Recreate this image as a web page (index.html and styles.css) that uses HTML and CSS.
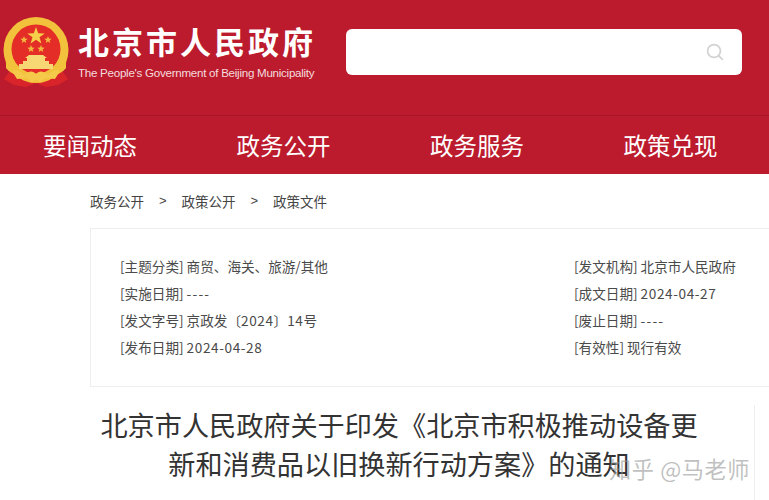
FILE: index.html
```html
<!DOCTYPE html>
<html lang="zh-CN">
<head>
<meta charset="utf-8">
<title>北京市人民政府</title>
<link rel="stylesheet" href="styles.css">
</head>
<body>
<header class="masthead">
  <svg class="emblem" width="70" height="72" viewBox="0 0 70 72" aria-hidden="true">
    <path d="M8 55 L3 62 L13 68 L25 70 L35 66 L45 70 L57 68 L67 62 L62 55 Z" fill="#d9252a"/>
    <ellipse cx="35" cy="33" rx="32.5" ry="33" fill="#f3c23c"/>
    <circle cx="35" cy="32" r="24.5" fill="#e32d26"/>
    <path d="M35 10 L37.2 16.3 L43.8 16.4 L38.5 20.3 L40.4 26.6 L35 22.8 L29.6 26.6 L31.5 20.3 L26.2 16.4 L32.8 16.3 Z" fill="#f6cf4a"/>
    <path d="M23 19 L24 21.6 L26.7 21.7 L24.6 23.4 L25.3 26 L23 24.5 L20.7 26 L21.4 23.4 L19.3 21.7 L22 21.6 Z" fill="#f2b740"/>
    <path d="M47 19 L48 21.6 L50.7 21.7 L48.6 23.4 L49.3 26 L47 24.5 L44.7 26 L45.4 23.4 L43.3 21.7 L46 21.6 Z" fill="#f2b740"/>
    <path d="M30 28 L31 30.6 L33.7 30.7 L31.6 32.4 L32.3 35 L30 33.5 L27.7 35 L28.4 32.4 L26.3 30.7 L29 30.6 Z" fill="#f2b740"/>
    <path d="M40 28 L41 30.6 L43.7 30.7 L41.6 32.4 L42.3 35 L40 33.5 L37.7 35 L38.4 32.4 L36.3 30.7 L39 30.6 Z" fill="#f2b740"/>
    <path d="M24 41 L28 38 H42 L46 41 H44 V44 H48 V47 H52 V52 H18 V47 H22 V44 H26 V41 Z" fill="#f6d774"/>
    <path d="M5 41 C9 53 20 58 35 58 C50 58 61 53 65 41 L65 51 C59 59 48 60 35 60 C22 60 11 59 5 51 Z" fill="#f3c23c"/>
    <path d="M11 54 C16 52 19 54 23 58 C28 54 31 53 35 57 C39 53 42 54 47 58 C51 54 54 52 59 54 L54 62 L44 61 L39 66 L35 62 L31 66 L26 61 L16 62 Z" fill="#f5c94a"/>
  </svg>
  <div class="brand">
    <div class="brand-cn">北京市人民政府</div>
    <div class="brand-en">The People's Government of Beijing Municipality</div>
  </div>
  <div class="search">
    <svg width="18" height="18" viewBox="0 0 18 18" aria-hidden="true">
      <circle cx="8" cy="8" r="6.4" fill="none" stroke="#d2d2d2" stroke-width="1.7"/>
      <path d="M12.6 12.6 L16.4 16.4" stroke="#d2d2d2" stroke-width="1.7" stroke-linecap="round"/>
    </svg>
  </div>
</header>
<nav class="mainnav">
  <a>要闻动态</a>
  <a>政务公开</a>
  <a>政务服务</a>
  <a>政策兑现</a>
</nav>
<div class="crumbs">
  <span>政务公开</span><span class="sep">&gt;</span><span>政策公开</span><span class="sep">&gt;</span><span>政策文件</span>
</div>
<section class="info">
  <ul class="col col-left">
    <li>[主题分类] 商贸、海关、旅游/其他</li>
    <li>[实施日期] <span class="num dashes">----</span></li>
    <li>[发文字号] 京政发〔<span class="num">2024</span>〕<span class="num">14</span>号</li>
    <li>[发布日期] <span class="num">2024-04-28</span></li>
  </ul>
  <ul class="col">
    <li>[发文机构] 北京市人民政府</li>
    <li>[成文日期] <span class="num">2024-04-27</span></li>
    <li>[废止日期] <span class="num dashes">----</span></li>
    <li>[有效性] 现行有效</li>
  </ul>
</section>
<main class="article">
  <h1>北京市人民政府关于印发《北京市积极推动设备更<br>新和消费品以旧换新行动方案》的通知</h1>
</main>
<div class="watermark">知乎 @马老师</div>
</body>
</html>
```
FILE: styles.css
```css
* { box-sizing: border-box; }
html, body { height: 500px; overflow: hidden; }
body {
  margin: 0;
  position: relative;
  background: #fff;
  font-family: "Noto Sans CJK SC", "Liberation Sans", sans-serif;
  color: #4d4d4d;
}
.masthead {
  height: 116px;
  background: #bc1b2d;
  border-bottom: 1px solid #a81727;
  display: flex;
  align-items: flex-start;
  padding-left: 1px;
}
.emblem { margin-top: 17px; flex: none; }
.brand { margin-left: 7px; width: 268px; flex: none; color: #fff; }
.brand-cn {
  margin-top: 20px;
  font-size: 31px;
  line-height: 42px;
  font-weight: 700;
  letter-spacing: 3px;
  white-space: nowrap;
}
.brand-en {
  margin-top: 3px;
  font-family: "Liberation Sans", sans-serif;
  font-size: 11.6px;
  line-height: 16px;
  color: #f4dcdf;
  letter-spacing: -0.27px;
  white-space: nowrap;
}
.search {
  margin-top: 29px;
  width: 396px;
  height: 46px;
  background: #fff;
  border-radius: 6px;
  display: flex;
  align-items: center;
  justify-content: flex-end;
  padding-right: 18px;
}
.mainnav {
  height: 58px;
  background: #bc1b2d;
  display: flex;
  align-items: center;
  padding-left: 43px;
  gap: 99.5px;
  color: #fff;
  font-size: 23.5px;
  line-height: 58px;
}
.crumbs {
  height: 54px;
  padding-left: 90px;
  display: flex;
  align-items: center;
  font-size: 13.5px;
  line-height: 52px;
  color: #444;
}
.sep { width: 37.5px; text-align: center; font-family: "Liberation Sans", sans-serif; font-size: 13px; }
.info {
  margin-left: 90px;
  height: 159px;
  width: 700px;
  border: 1px solid #eee;
  display: flex;
  padding: 24px 0 0 29px;
}
.col { list-style: none; margin: 0; padding: 0; font-size: 13.6px; line-height: 27px; color: #4a4a4a; }
.col-left { width: 454px; flex: none; }
.num { letter-spacing: 0.6px; }
.dashes { letter-spacing: 1.2px; }
.article {
  margin-top: 18px;
  width: 755px;
  height: 96px;
  border-right: 1px solid #eee;
  padding-left: 44px;
}
h1 {
  margin: 0;
  font-size: 27.15px;
  font-weight: 400;
  line-height: 39px;
  text-align: center;
  color: #333;
  white-space: nowrap;
}
.watermark {
  position: absolute;
  left: 609px;
  top: 454px;
  font-size: 22.2px;
  line-height: 28px;
  letter-spacing: 0.6px;
  color: rgba(150, 150, 150, 0.6);
  white-space: nowrap;
}
```
